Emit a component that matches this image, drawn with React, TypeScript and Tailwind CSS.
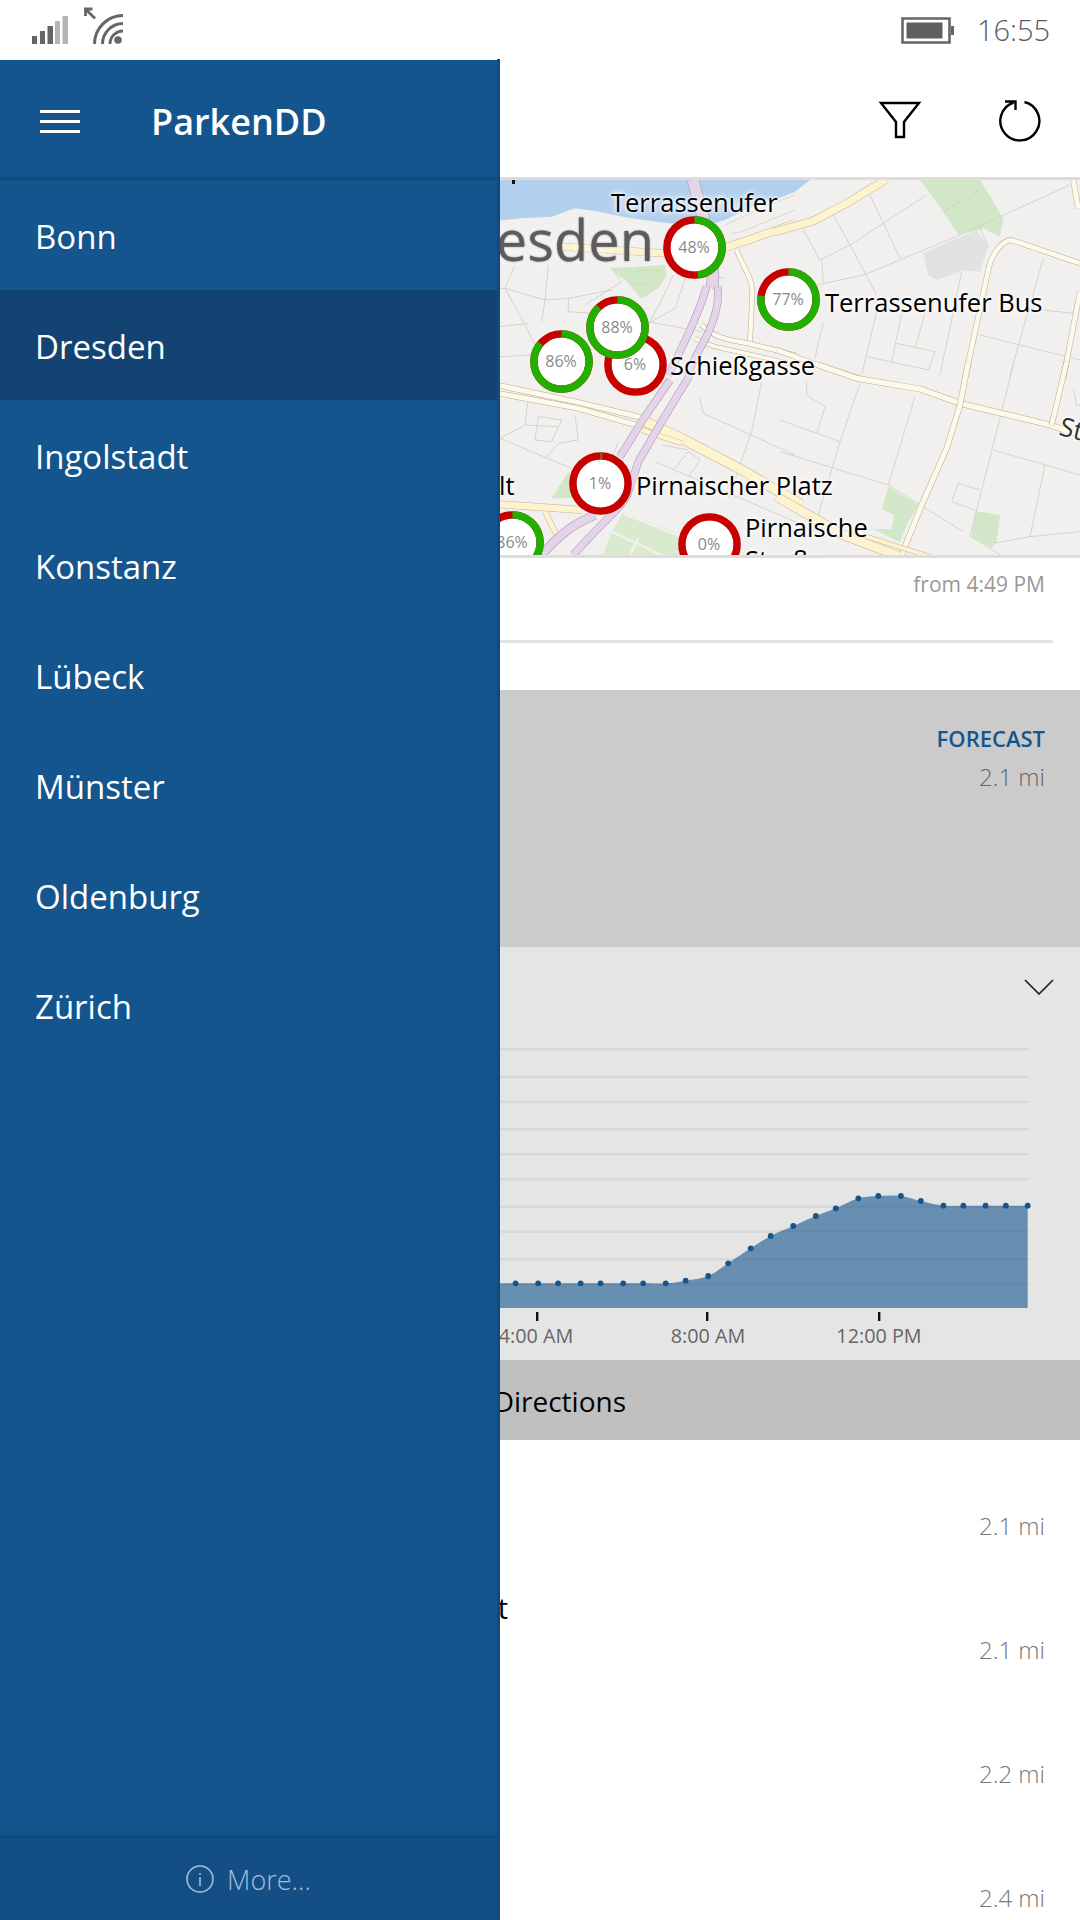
import React from "react";

const F = "font-['Open_Sans','Noto_Sans',sans-serif]";

const cities = ["Bonn", "Dresden", "Ingolstadt", "Konstanz", "Lübeck", "Münster", "Oldenburg", "Zürich"];

const zx = (p: number) => 490 + (p * 590) / 1568;
const zy = (p: number) => 1040 + p / 3;
const dotsRaw: [number, number][] = [
  [-60, 730], [68, 730], [128, 730], [181, 730], [241, 730], [294, 730], [354, 730], [407, 730], [467, 730], [520, 722], [580, 708], [633, 670],
  [693, 625], [746, 588], [806, 558], [866, 528], [919, 505], [979, 475], [1032, 468], [1092, 468], [1145, 483],
  [1205, 497], [1258, 497], [1317, 497], [1371, 497], [1429, 497],
];
const dots = dotsRaw.map(([x, y]) => [zx(x), zy(y) - 1040] as [number, number]);

function smooth(pts: [number, number][]) {
  let d = `M${pts[0][0]} ${pts[0][1]}`;
  for (let i = 0; i < pts.length - 1; i++) {
    const p0 = pts[Math.max(0, i - 1)];
    const p1 = pts[i];
    const p2 = pts[i + 1];
    const p3 = pts[Math.min(pts.length - 1, i + 2)];
    d += ` C${p1[0] + (p2[0] - p0[0]) / 6} ${p1[1] + (p2[1] - p0[1]) / 6} ${p2[0] - (p3[0] - p1[0]) / 6} ${p2[1] - (p3[1] - p1[1]) / 6} ${p2[0]} ${p2[1]}`;
  }
  return d;
}
const areaPath = `${smooth(dots)} V268 H${dots[0][0]} Z`;
const gridYs = [9, 36.7, 61.7, 89, 114, 139, 166.5, 191.5, 219, 244];

function Ring({ pct, label, className }: { pct: number; label: string; className: string }) {
  const r = 27.6;
  const c = 2 * Math.PI * r;
  return (
    <div className={`absolute w-[63px] h-[63px] ${className}`}>
      <svg viewBox="0 0 63 63" className="absolute inset-0 w-[63px] h-[63px]">
        <circle cx="31.5" cy="31.5" r="31" fill="#8a8a7a" opacity="0.55" />
        <circle cx="31.5" cy="31.5" r="24" fill="#ffffff" />
        <circle cx="31.5" cy="31.5" r={r} fill="none" stroke="#c80000" strokeWidth="7.4" />
        <circle
          cx="31.5"
          cy="31.5"
          r={r}
          fill="none"
          stroke="#22b000"
          strokeWidth="7.4"
          strokeDasharray={`${(c * pct) / 100} ${c}`}
          transform="rotate(-90 31.5 31.5)"
        />
      </svg>
      <div className={`absolute inset-0 flex items-center justify-center text-[16px] text-[#8a8a8a] ${F}`}>{label}</div>
    </div>
  );
}

const halo = "[text-shadow:0_0_3px_#fff,0_0_5px_#fff,0_0_7px_#fff]";

function MapArt() {
  const minor = { fill: "none", stroke: "#d5d3ce", strokeWidth: 3 };
  const cream = (d: string, w = 15) => (
    <g fill="none" strokeLinecap="butt" strokeLinejoin="round" key={d}>
      <path d={d} stroke="#b5a998" strokeWidth={w + 3} />
      <path d={d} stroke="#fefae9" strokeWidth={w} />
    </g>
  );
  const yellow = (d: string, w = 20) => (
    <g fill="none" strokeLinejoin="round" key={d}>
      <path d={d} stroke="#c2b393" strokeWidth={w + 3} />
      <path d={d} stroke="#fdf3cf" strokeWidth={w} />
    </g>
  );
  const purple = (d: string, w = 20) => (
    <g fill="none" strokeLinejoin="round" key={d}>
      <path d={d} stroke="#a98fae" strokeWidth={w + 3} />
      <path d={d} stroke="#e3d4ea" strokeWidth={w} />
    </g>
  );
  return (
    <svg viewBox="0 180 1080 375" className="absolute inset-0 w-[1080px] h-[375px]">
      <rect x="0" y="180" width="1080" height="375" fill="#f1f0ee" />
      {/* top-left region */}
      <g transform="translate(495 175) scale(0.33333)">
        <path d="M0 15 H945 L900 50 L850 70 L760 100 L690 135 L640 150 L520 145 L400 128 L300 108 L240 100 L170 125 L80 130 L0 138 Z" fill="#b2d0ee" />
        <path d="M345 280 L510 270 L515 300 L490 340 L440 372 L395 320 Z" fill="#d2e7c7" />
        <path d="M400 300 C430 280 490 280 500 300 M400 320 C440 340 470 320 490 300" fill="none" stroke="#c4d8b8" strokeWidth="2" />
        <path d="M60 270 L30 340 L150 375 L220 370 L350 345 M160 270 L150 375 L140 440 M220 370 L220 410 L300 415 M30 340 L90 450 L120 510 M15 455 L100 445 M350 280 L380 320 L270 390 M535 300 L500 375 L460 450 L420 410 M575 300 L540 400 L470 440 M460 440 L620 470 M15 545 L110 540 M690 310 L640 300 M15 340 L30 340" {...minor} />
        <path d="M710 175 L740 170 L900 105 M690 150 L810 95 L900 60" fill="none" stroke="#d5d3ce" strokeWidth="2.5" />
        {yellow("M200 215 L510 235")}
        {yellow("M690 218 L760 195 L900 145", 22)}
        {cream("M725 225 C745 280 775 310 772 360 L765 500", 13)}
        {cream("M620 450 C660 490 700 495 760 505 L900 540", 13)}
        {cream("M600 490 C650 520 700 520 900 570", 11)}
        {purple("M595 15 C605 70 625 110 640 200 C650 260 660 300 650 340", 34)}
        {purple("M635 335 C610 420 560 520 520 600", 20)}
        {purple("M668 335 C675 400 650 460 610 530 C595 560 585 580 575 600", 20)}
      </g>
      {/* top-right region */}
      <g transform="translate(780 175) scale(0.33333)">
        <path d="M420 15 H600 L670 130 L660 185 L610 160 L535 180 L490 110 Z" fill="#d2e7c7" />
        <path d="M430 235 L590 165 L625 215 L600 290 L550 285 L470 315 L445 300 Z" fill="#e2e2e2" />
        <path d="M270 60 L360 250 M440 60 L210 210 L120 255 M120 255 L70 165 M160 120 L210 210 L290 360 M125 255 L130 325 M110 330 L250 300 L540 180 L870 30 M545 290 L480 600 M790 250 L690 600 M600 480 L900 555 M790 405 L880 415 M350 505 L465 530 L445 585 L260 545 M365 415 L335 560 M435 415 L405 520 M290 410 L245 600 M130 440 L105 550 M520 60 L600 160 L625 215 M490 110 L540 80 M565 70 L600 40" {...minor} />
        {yellow("M-20 172 L100 138 L200 85 L320 12", 22)}
        {cream("M900 265 L700 197 Q680 190 655 220 Q630 250 625 285 L555 610", 14)}
        {cream("M880 15 L895 100")}
        {cream("M900 350 L850 610", 14)}
        {cream("M-10 525 L100 565 L240 610", 14)}
      </g>
      {/* bottom-left region */}
      <g transform="translate(495 365) scale(0.33333)">
        <path d="M220 320 L170 400 L240 400 L240 340 Z" fill="#d2e7c7" />
        <path d="M385 440 L600 525 L560 580 L320 580 L350 500 Z" fill="#d9eace" />
        <path d="M385 445 L620 540 M350 500 L520 580 M430 520 L400 580" fill="none" stroke="#f1f0ee" strokeWidth="8" />
        <path d="M615 100 L625 145 L900 270 M800 50 L770 200 L700 400 M15 220 L230 310 M150 280 L190 235 L250 225 M130 155 L200 165 L170 230 L120 225 Z M90 180 L190 185 M100 100 L90 180 L15 220 M250 225 L240 150 M480 290 L900 470 M540 310 L580 260 L615 285 L580 335 M370 230 L350 280 M500 240 L580 255 M690 340 L720 400" {...minor} />
        {cream("M15 62 L250 112 L440 158", 15)}
        {cream("M15 86 L250 130 L430 182", 15)}
        {yellow("M440 165 L560 220 L750 320 L920 420", 28)}
        {yellow("M440 195 L560 235", 14)}
        {yellow("M15 418 L260 435", 20)}
        {yellow("M150 440 L185 510", 14)}
        {purple("M525 45 L440 170 L375 275", 20)}
        {purple("M585 30 L500 170 L430 290 L395 395 C370 440 320 470 235 570", 20)}
        {purple("M300 450 C250 470 200 500 140 570", 24)}
      </g>
      {/* bottom-right region */}
      <g transform="translate(780 365) scale(0.33333)">
        <path d="M325 365 L415 420 L380 480 L360 532 L280 492 L335 492 L342 450 L305 432 Z" fill="#d2e7c7" />
        <path d="M585 438 L660 450 L650 530 L635 550 L575 515 Z" fill="#d2e7c7" />
        <path d="M240 55 L180 230 L100 500 M0 165 L180 230 M80 50 L80 90 L135 125 L110 205 M405 95 L325 360 M0 260 L325 360 L550 500 M700 0 L570 515 M640 255 L900 330 M795 300 L750 515 M535 355 L600 375 M535 355 L515 410 L585 435 M640 535 L750 515 L900 500 M575 515 L660 570 M880 70 L890 120 L900 122" {...minor} />
        {cream("M115 0 L230 40 L420 72 L540 115 L810 180 L900 210", 16)}
        {cream("M565 -10 L540 120 L500 250 L425 420 L365 570", 15)}
        {cream("M860 -10 L815 180", 14)}
        {yellow("M-10 395 L190 510 L360 575", 26)}
        {yellow("M260 515 L450 575", 12)}
      </g>
      <rect x="512" y="180" width="3" height="4" fill="#111" />
    </svg>
  );
}

export default function App() {
  return (
    <div className={`relative w-[1080px] h-[1920px] overflow-hidden bg-white ${F}`}>
      {/* status bar */}
      <div className="h-[60px] flex items-start">
        <svg viewBox="0 0 140 60" className="w-[140px] h-[60px] shrink-0">
          <rect x="32" y="36" width="5" height="8" fill="#666" />
          <rect x="40" y="31" width="5" height="13" fill="#666" />
          <rect x="47.5" y="26" width="5.5" height="18" fill="#666" />
          <rect x="55" y="21" width="5" height="23" fill="#b4b4b4" />
          <rect x="62.5" y="16" width="5.5" height="28" fill="#b4b4b4" />
          <path d="M94.5 44 A28.5 28.5 0 0 1 123 15.5 M102.5 44 A20.5 20.5 0 0 1 123 23.5 M110 44 A13 13 0 0 1 123 31" fill="none" stroke="#666" strokeWidth="3" />
          <circle cx="118" cy="40" r="3.8" fill="#666" />
          <path d="M95 18.5 L87 10.5 M85.5 16 V9 H92.5" fill="none" stroke="#666" strokeWidth="2.8" />
        </svg>
        <div className="ml-auto flex items-center h-[60px] pr-[30px]">
          <svg viewBox="0 0 54 27" className="w-[54px] h-[27px]">
            <path d="M1.5 1.5 H48.5 V25.5 H1.5 Z" fill="none" stroke="#666" strokeWidth="2.6" />
            <rect x="5.5" y="5.5" width="36" height="16" fill="#5f5f5f" />
            <rect x="50" y="9" width="3" height="9" fill="#666" />
          </svg>
          <div className="ml-[22px] text-[29px] font-light text-[#5c5c5c] leading-[60px]">16:55</div>
        </div>
      </div>

      {/* app bar */}
      <div className="h-[117px] flex justify-end items-start">
        <svg viewBox="870 60 180 117" className="w-[180px] h-[117px] mr-[30px]">
          <path d="M881 103 H919 L904 122 V137 H896 V122 Z" fill="none" stroke="#000" strokeWidth="2.4" />
          <path d="M1024.5 102 A19.5 19.5 0 1 1 1013.5 102.5" fill="none" stroke="#000" strokeWidth="2.4" />
          <path d="M1005 101.5 H1015.5 V110" fill="none" stroke="#000" strokeWidth="2.4" />
        </svg>
      </div>

      {/* map */}
      <div className="relative h-[381px] border-y-[3px] border-[#dddddd] overflow-hidden">
        <MapArt />
        <div className={`absolute right-[426px] top-[24px] text-[56px] leading-[70px] text-[#5c5c5c] [text-shadow:0_0_2px_#777,0_0_8px_#fff] whitespace-nowrap`}>Dresden</div>
        {[
          ["Terrassenufer", "left-[611px] top-[6px]"],
          ["Terrassenufer Bus", "left-[825px] top-[106px]"],
          ["Schießgasse", "left-[670px] top-[169px]"],
          ["Pirnaischer Platz", "left-[636px] top-[289px]"],
          ["lt", "left-[499px] top-[289px]"],
        ].map(([t, c]) => (
          <div key={t} className={`absolute ${c} text-[25.5px] font-medium leading-[32px] text-black whitespace-nowrap ${halo}`}>{t}</div>
        ))}
        <div className={`absolute left-[745px] top-[331px] text-[25.5px] font-medium leading-[32px] text-black ${halo}`}>
          Pirnaische
          <br />
          Straße
        </div>
        <div className={`absolute left-[1060px] top-[232px] text-[26px] leading-[32px] text-[#333] rotate-[14deg] ${halo}`}>St</div>
        <Ring pct={86} label="86%" className="left-[480.5px] top-[330.5px]" />
        <Ring pct={48} label="48%" className="left-[662.5px] top-[35.5px]" />
        <Ring pct={77} label="77%" className="left-[756.5px] top-[87.5px]" />
        <Ring pct={6} label="6%" className="left-[603.5px] top-[152.5px]" />
        <Ring pct={86} label="86%" className="left-[529.5px] top-[149.5px]" />
        <Ring pct={88} label="88%" className="left-[585.5px] top-[115.5px]" />
        <Ring pct={1} label="1%" className="left-[568.5px] top-[271.5px]" />
        <Ring pct={0} label="0%" className="left-[677.5px] top-[332.5px]" />
      </div>

      {/* from row */}
      <div className="h-[132px] pt-[12px]">
        <div className="h-[28px] leading-[28px] text-right pr-[35px] text-[21px] text-[#999]">from 4:49 PM</div>
        <div className="h-[3px] mt-[42px] mr-[27px] bg-[#e2e2e2]" />
      </div>

      {/* selected parking */}
      <div className="h-[257px] bg-[#cbcbcb] flex flex-col items-end pr-[35px] pt-[34px]">
        <div className="text-[22px] leading-[28px] font-semibold text-[#14558d]">FORECAST</div>
        <div className="mt-[7px] text-[24px] leading-[36px] font-light text-[#666]">2.1 mi</div>
      </div>

      {/* chart */}
      <div className="h-[413px] bg-[#e5e5e5] flex flex-col">
        <div className="h-[93px] flex justify-end items-start pt-[32px] pr-[26px]">
          <svg viewBox="0 0 30 16" className="w-[30px] h-[16px]">
            <path d="M1 1 L15 15 L29 1" fill="none" stroke="#222" strokeWidth="1.7" />
          </svg>
        </div>
        <svg viewBox="0 0 1080 320" className="w-[1080px] h-[320px] block">
          {gridYs.map((y) => (
            <rect key={y} x="400" y={y - 1} width="629" height="2.4" fill="#d8d8d8" />
          ))}
          <path d={areaPath} fill="#14558d" opacity="0.6" />
          {dots.map(([x, y]) => (
            <circle key={x} cx={x} cy={y} r="2.9" fill="#14558d" />
          ))}
          {[537, 707, 879].map((x) => (
            <rect key={x} x={x - 1} y="272" width="2.4" height="9" fill="#111" />
          ))}
          <g fontSize="19.8" fill="#666" textAnchor="middle" fontFamily="'Open Sans', sans-serif">
            <text x="536" y="303">4:00 AM</text>
            <text x="708" y="303">8:00 AM</text>
            <text x="879" y="303">12:00 PM</text>
          </g>
        </svg>
      </div>

      {/* directions */}
      <div className="h-[80px] bg-[#c0c0c0] flex items-center pt-[2px]">
        <div className="w-[626px] text-right text-[28px] leading-[40px] text-black">Directions</div>
      </div>

      {/* list */}
      <div className="pt-[24px] flex flex-col">
        {[
          ["", "2.1 mi"],
          ["Altmarkt", "2.1 mi"],
          ["", "2.2 mi"],
          ["", "2.4 mi"],
        ].map(([name, d], i) => (
          <div key={i} className="h-[124px] flex justify-between pr-[35px]">
            <div className="w-[508px] text-right text-[29px] leading-[40px] text-black">{name}</div>
            <div className="text-[24px] leading-[124px] font-light text-[#777]">{d}</div>
          </div>
        ))}
      </div>

      {/* drawer */}
      <div className="absolute left-0 top-[59px] bottom-0 w-[500px] flex flex-col border-r-[3px] border-[#104b80] bg-[#14558d]">
        <div className="h-[1px] bg-white" />
        <div className="h-[120px] pt-[6px] flex items-center shrink-0 border-b-[3px] border-[#0f4a7c]">
          <div className="ml-[40px] w-[40px] flex flex-col gap-[7px]">
            <div className="h-[3px] bg-white" />
            <div className="h-[3px] bg-white" />
            <div className="h-[3px] bg-white" />
          </div>
          <div className="ml-[71px] text-[36px] font-semibold text-white">ParkenDD</div>
        </div>
        <div className="flex-1 flex flex-col">
          {cities.map((c) => (
            <div key={c} className={`h-[110px] flex items-center pl-[35px] pt-[3px] text-[33px] text-white ${c === "Dresden" ? "bg-[#124373]" : ""}`}>
              {c}
            </div>
          ))}
        </div>
        <div className="h-[85px] shrink-0 border-t-[3px] border-[#0f4a7c] bg-[#134f85] flex items-center justify-center">
          <svg viewBox="0 0 28 28" className="w-[28px] h-[28px]">
            <circle cx="14" cy="14" r="13" fill="none" stroke="#a3bdd6" strokeWidth="1.6" />
            <rect x="13.2" y="12" width="1.6" height="9" fill="#a3bdd6" />
            <rect x="13.2" y="8" width="1.6" height="1.8" fill="#a3bdd6" />
          </svg>
          <div className="ml-[13px] pt-[2px] text-[27px] text-[#a3bdd6] font-light">More...</div>
        </div>
      </div>
    </div>
  );
}
